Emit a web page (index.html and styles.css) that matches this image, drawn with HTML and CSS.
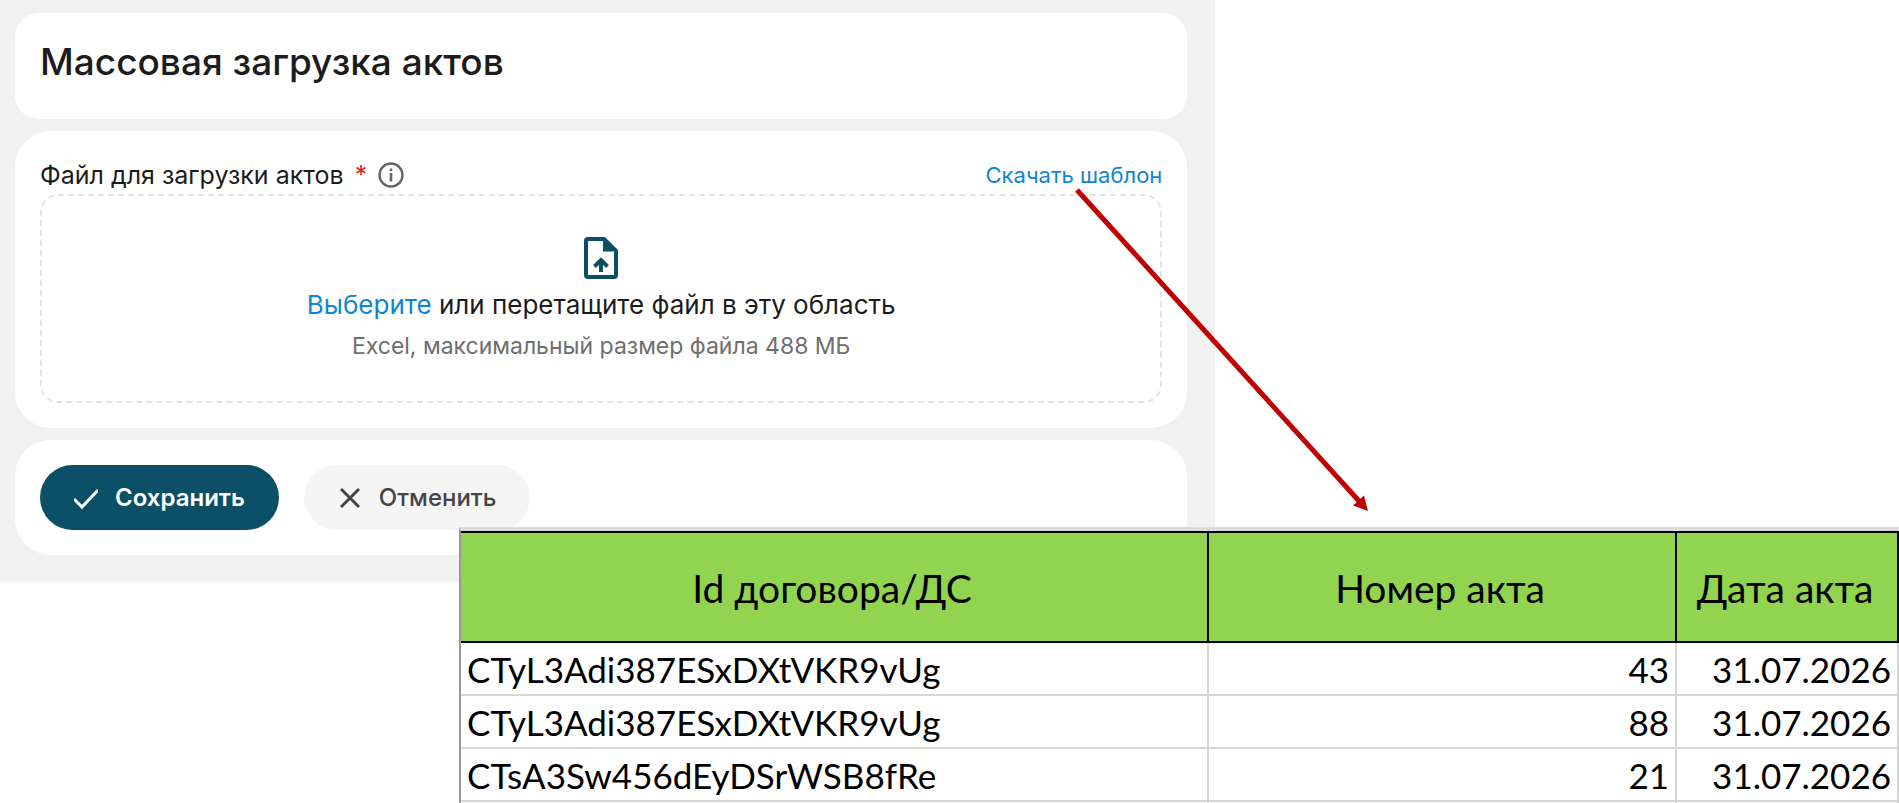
FILE: index.html
```html
<!DOCTYPE html>
<html lang="ru">
<head>
  <meta charset="UTF-8" />
  <meta name="viewport" content="width=device-width, initial-scale=1.0" />
  <title>Массовая загрузка актов</title>
  <link rel="stylesheet" href="styles.css">
</head>

<body>
  <div class="page">

    <!-- Upload form -->
    <form class="panel">
      <header class="card card-title">
        <h1>Массовая загрузка актов</h1>
      </header>

      <section class="card">
        <div class="field-head">
          <label class="field-label" for="acts-file">Файл для загрузки актов</label>
          <span class="required">*</span>
          <svg class="info-icon" viewBox="0 0 26 26" aria-hidden="true">
            <circle cx="13" cy="13" r="11.5" fill="none" stroke="#666" stroke-width="2.4" />
            <rect x="11.700" y="11" width="2.600" height="8.5" fill="#666" />
            <rect x="11.700" y="6.500" width="2.600" height="2.600" fill="#666" />
          </svg>
          <a class="template-link" href="#template">Скачать шаблон</a>
        </div>

        <label class="dropzone">
          <input class="file-input" type="file" id="acts-file" accept=".xls,.xlsx">
          <svg class="upload-icon" viewBox="0 0 34 42" aria-hidden="true">
            <path fill="#0b4f66" fill-rule="evenodd" d="M4 0H21L34 13V38a4 4 0 0 1-4 4H4a4 4 0 0 1-4-4V4a4 4 0 0 1 4-4ZM4 4V38H30V14.500H19V4Z" />
            <path fill="none" stroke="#0b4f66" stroke-width="4" d="M17 35V23M10.500 29.500L17 23L23.500 29.500" />
          </svg>
          <span class="drop-text"><span class="link">Выберите</span> или перетащите файл в эту область</span>
          <span class="drop-hint">Excel, максимальный размер файла 488 МБ</span>
        </label>
      </section>

      <footer class="card actions">
        <button class="btn btn-save" type="submit">
          <svg class="btn-icon" viewBox="0 0 24 24" aria-hidden="true">
            <path d="M0 13L8 21L24 4" />
          </svg>
          Сохранить
        </button>
        <button class="btn btn-cancel" type="button">
          <svg class="btn-icon" viewBox="0 0 24 24" aria-hidden="true">
            <path d="M3 3L21 21M21 3L3 21" />
          </svg>
          Отменить
        </button>
      </footer>
    </form>

    <!-- Template contents -->
    <div class="sheet" id="template">
      <table>
        <colgroup>
          <col class="col-id">
          <col class="col-number">
          <col class="col-date">
        </colgroup>
        <thead>
          <tr>
            <th>Id договора/ДС</th>
            <th>Номер акта</th>
            <th>Дата акта</th>
          </tr>
        </thead>
        <tbody>
          <tr>
            <td>CTyL3Adi387ESxDXtVKR9vUg</td>
            <td class="num">43</td>
            <td class="num">31.07.2026</td>
          </tr>
          <tr>
            <td>CTyL3Adi387ESxDXtVKR9vUg</td>
            <td class="num">88</td>
            <td class="num">31.07.2026</td>
          </tr>
          <tr>
            <td>CTsA3Sw456dEyDSrWSB8fRe</td>
            <td class="num">21</td>
            <td class="num">31.07.2026</td>
          </tr>
          <tr>
            <td></td>
            <td></td>
            <td></td>
          </tr>
        </tbody>
      </table>
    </div>

    <!-- Arrow from the link to the table -->
    <svg class="arrow" viewBox="0 0 294 324" aria-hidden="true">
      <path d="M2 2L284 313" fill="none" stroke="#c00000" stroke-width="5" />
      <path d="M293 323L278 317.500L289 307.500Z" fill="#c00000" />
    </svg>

  </div>
</body>
</html>
```

FILE: styles.css
```css
* {
  box-sizing: border-box;
}

body {
  margin: 0;
  background: #fff;
  color: #1c1c1c;
  font-family: Inter, "Liberation Sans", sans-serif;
}

.page {
  position: relative;
  height: 100vh;
  overflow: hidden;
}

/* form */
.panel {
  display: flex;
  flex-direction: column;
  gap: 12px;
  width: 64%;
  padding: 13px 28px 27px 15px;
  background: #f1f1f1;
}

.card {
  padding: 25px;
  background: #fff;
  border-radius: 36px;
}

.card-title {
  padding-bottom: 33px;
  border-radius: 24px;
}

h1 {
  margin: 0;
  font-size: 37px;
  font-weight: 500;
  line-height: 48px;
}

.field-head {
  display: flex;
  align-items: center;
  height: 38px;
}

.field-label {
  font-size: 25px;
}

.required {
  margin: 0 11px;
  color: #d9252a;
  font-size: 25px;
}

.info-icon {
  width: 26px;
  height: 26px;
}

.template-link {
  margin-left: auto;
  font-size: 22px;
  text-decoration: none;
}

.template-link,
.link {
  color: #0f86d2;
}

.dropzone {
  display: flex;
  flex-direction: column;
  align-items: center;
  gap: 10px;
  padding: 41px 20px 40px;
  border: 2px dashed #e4e4e4;
  border-radius: 18px;
  cursor: pointer;
}

.file-input {
  position: absolute;
  width: 1px;
  height: 1px;
  opacity: 0;
}

.upload-icon {
  width: 34px;
  height: 42px;
}

.drop-text {
  font-size: 26px;
  line-height: 32px;
}

.drop-hint {
  color: #6e6e6e;
  font-size: 23px;
  line-height: 30px;
}

.actions {
  display: flex;
  gap: 25px;
}

.btn {
  display: flex;
  align-items: center;
  gap: 17px;
  height: 65px;
  padding: 0 34px;
  border: none;
  border-radius: 33px;
  font-family: inherit;
  font-size: 24px;
  cursor: pointer;
}

.btn-save {
  background: #0b4f66;
  color: #fff;
  font-weight: 600;
}

.btn-cancel {
  background: #f5f5f5;
  color: #444;
  font-weight: 500;
}

.btn-icon {
  width: 24px;
  height: 24px;
  fill: none;
  stroke: currentColor;
  stroke-width: 3;
}

/* spreadsheet, lies over the form */
.sheet {
  position: absolute;
  top: 527px;
  left: 459px;
  right: 0;
  border-top: 4px solid #dcdcdc;
  border-left: 2px solid #999;
  background: #fff;
}

table {
  width: 100%;
  table-layout: fixed;
  border-collapse: separate;
  border-spacing: 0;
  color: #000;
  font-family: Lato, "Liberation Sans", sans-serif;
  font-size: 35px;
}

.col-id {
  width: 748px;
}

.col-number {
  width: 468px;
}

th {
  height: 112px;
  padding: 2px 4px 0 0;
  background: #92d350;
  border-top: 2px solid #000;
  border-right: 2px solid #000;
  border-bottom: 2px solid #000;
  font-size: 39px;
  font-weight: 400;
}

td {
  height: 53px;
  padding: 0 6px;
  border-right: 2px solid #d6d6d6;
  border-bottom: 2px solid #d6d6d6;
  line-height: 44px;
}

.num {
  text-align: right;
}

.arrow {
  position: absolute;
  top: 188px;
  left: 1075px;
  width: 294px;
  height: 324px;
}
```
